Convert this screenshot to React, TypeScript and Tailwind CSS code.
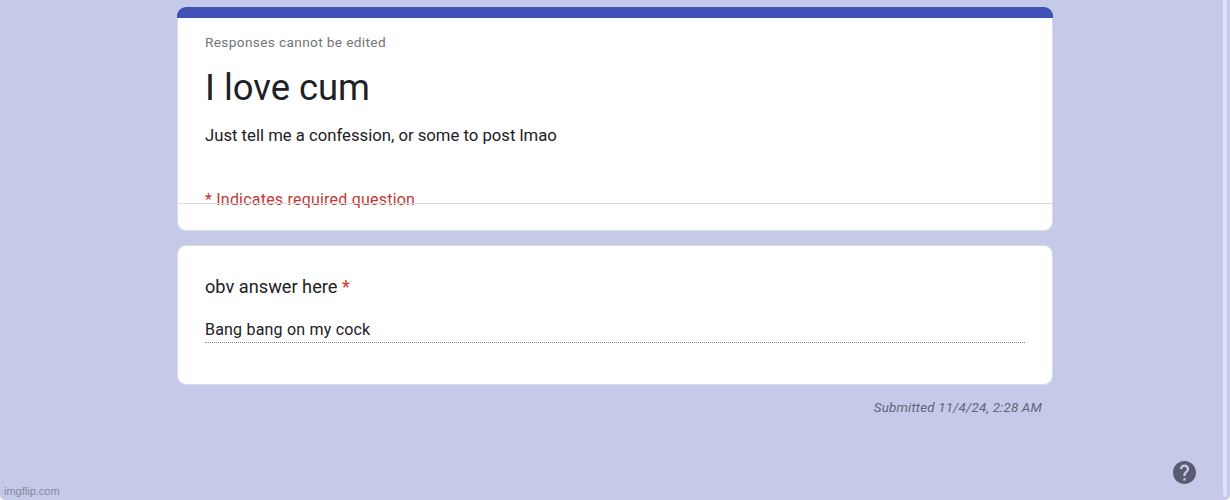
import type { ReactNode } from 'react';
import { clsx } from 'clsx';

interface CardProps {
  className?: string;
  children: ReactNode;
}

function Card({ className, children }: CardProps) {
  return (
    <section
      className={clsx(
        'overflow-hidden rounded-[9px] border border-[#d8dbe8] bg-white text-[#202124]',
        className,
      )}
    >
      {children}
    </section>
  );
}

function HelpIcon() {
  return (
    <svg viewBox="2 2 20 20" className="size-[23px]" fill="#5a5c70">
      <path d="M12 2C6.48 2 2 6.48 2 12s4.48 10 10 10 10-4.48 10-10S17.52 2 12 2zm1 17h-2v-2h2v2zm2.07-7.75l-.9.92C13.45 12.9 13 13.5 13 15h-2v-.5c0-1.1.45-2.1 1.17-2.83l1.24-1.26c.37-.36.59-.86.59-1.41 0-1.1-.9-2-2-2s-2 .9-2 2H8c0-2.21 1.79-4 4-4s4 1.79 4 4c0 .88-.36 1.68-.93 2.25z" />
    </svg>
  );
}

export default function App() {
  return (
    <div className="h-[500px] overflow-hidden bg-white font-['Roboto',sans-serif]">
      <div className="relative h-full rounded-b-[5px] bg-[#c6cae9] pt-[7px]">
        <main className="mx-auto w-[876px]">
          <div className="h-[11px] rounded-t-[9px] bg-[#3f51b5]" />
          <Card className="h-[213px] rounded-t-none border-t-0">
            <div className="h-[185px] px-[27px] pt-3.5">
              <p className="text-[13.7px] leading-5 tracking-[0.34px] whitespace-nowrap text-[#70757a]">
                Responses cannot be edited
              </p>
              <h1 className="mt-[13px] text-[36.4px] leading-[46px] whitespace-nowrap">
                I love cum
              </h1>
              <p className="mt-[13px] text-[16.7px] leading-6 whitespace-nowrap">
                Just tell me a confession, or some to post lmao
              </p>
              <p className="mt-10 text-[16px] leading-6 tracking-[0.21px] whitespace-nowrap text-[#c5362f]">
                * Indicates required question
              </p>
            </div>
            {/* divider runs over the required note */}
            <hr className="relative border-[#dadce0]" />
          </Card>

          <Card className="mt-[14px] h-[140px] px-[27px] pt-[27px]">
            <h2 className="text-[18.2px] leading-[27px] whitespace-nowrap">
              obv answer here <span className="text-[#d93025]">*</span>
            </h2>
            <div className="mt-[15px] h-7 border-b border-dotted border-[#85878a] pt-[3px] text-[16px] leading-6 tracking-[0.2px]">
              Bang bang on my cock
            </div>
          </Card>

          <p className="mt-[13px] pr-[11px] text-right text-[13.4px] leading-5 tracking-[0.16px] text-[#62647a] italic">
            Submitted 11/4/24, 2:28 AM
          </p>
        </main>

        <div className="absolute top-[461px] left-[1173px]">
          <HelpIcon />
        </div>
        <div className="absolute top-0 right-[3px] h-[497px] w-1 rounded-b-full bg-[#dce0f6]" />
        <span className="absolute top-[484px] left-1 font-['Liberation_Sans',sans-serif] text-[11px] leading-[14px] text-[#85879c]">
          imgflip.com
        </span>
      </div>
    </div>
  );
}
